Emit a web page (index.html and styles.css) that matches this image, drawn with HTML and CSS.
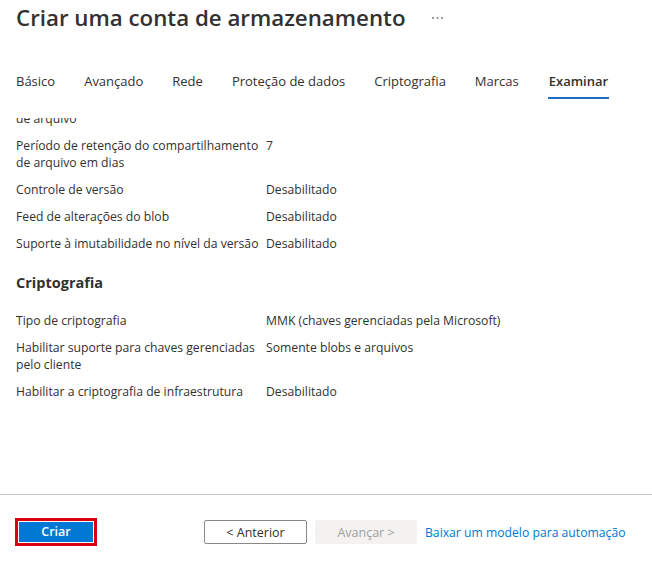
FILE: index.html
```html
<!DOCTYPE html>
<html lang="pt-BR">
<head>
<meta charset="utf-8">
<title>Criar uma conta de armazenamento</title>
<link rel="stylesheet" href="styles.css">
</head>
<body>
<div class="page">
  <header class="header">
    <h1 class="title">Criar uma conta de armazenamento</h1>
    <svg class="more" width="14" height="4" viewBox="0 0 14 4" aria-label="Mais"><circle cx="2" cy="2" r="1.1" fill="#8a8886"/><circle cx="6.5" cy="2" r="1.1" fill="#8a8886"/><circle cx="11" cy="2" r="1.1" fill="#8a8886"/></svg>
  </header>
  <nav class="tabs">
    <span class="tab">Básico</span>
    <span class="tab">Avançado</span>
    <span class="tab">Rede</span>
    <span class="tab">Proteção de dados</span>
    <span class="tab">Criptografia</span>
    <span class="tab">Marcas</span>
    <span class="tab active">Examinar</span>
  </nav>
  <main class="scroll">
    <div class="content">
      <div class="row"><div class="label nowrap">Exclusão temporária de compartilhamentos<br>de arquivo</div><div class="value">Habilitado</div></div>
      <div class="row"><div class="label">Período de retenção do compartilhamento de arquivo em dias</div><div class="value">7</div></div>
      <div class="row"><div class="label">Controle de versão</div><div class="value">Desabilitado</div></div>
      <div class="row"><div class="label">Feed de alterações do blob</div><div class="value">Desabilitado</div></div>
      <div class="row"><div class="label">Suporte à imutabilidade no nível da versão</div><div class="value">Desabilitado</div></div>
      <h2 class="section">Criptografia</h2>
      <div class="row"><div class="label">Tipo de criptografia</div><div class="value">MMK (chaves gerenciadas pela Microsoft)</div></div>
      <div class="row"><div class="label">Habilitar suporte para chaves gerenciadas pelo cliente</div><div class="value">Somente blobs e arquivos</div></div>
      <div class="row"><div class="label">Habilitar a criptografia de infraestrutura</div><div class="value">Desabilitado</div></div>
    </div>
  </main>
  <footer class="footer">
    <span class="highlight"><button class="btn primary">Criar</button></span>
    <button class="btn secondary">&lt; Anterior</button>
    <button class="btn disabled">Avançar &gt;</button>
    <a class="link" href="#">Baixar um modelo para automação</a>
  </footer>
</div>
</body>
</html>
```

FILE: styles.css
```css
* { box-sizing: border-box; }
html, body { margin: 0; padding: 0; background: #fff; }
body {
  font-family: "Open Sans", "Noto Sans", sans-serif;
  color: #323130;
  font-size: 12.2px;
}
.page {
  width: 652px;
  height: 569px;
  display: flex;
  flex-direction: column;
  overflow: hidden;
}
.header {
  display: flex;
  align-items: center;
  padding: 1px 0 0 16px;
  height: 34px;
}
.title {
  margin: 0;
  font-size: 22.3px;
  font-weight: 600;
  line-height: 32px;
  color: #323130;
}
.more {
  margin-left: 25px;
  margin-top: 1px;
  display: block;
}
.tabs {
  display: flex;
  gap: 29px;
  padding: 0 0 0 16px;
  margin-top: 29px;
}
.tab {
  font-size: 13px;
  line-height: 20px;
  padding: 8px 0 6px;
  border-bottom: 2px solid transparent;
  color: #323130;
}
.tab.active {
  font-weight: 600;
  border-bottom-color: #1b6ec2;
  padding-left: 1px;
  padding-right: 1px;
}
.scroll {
  margin-top: 19px;
  height: 376px;
  overflow: hidden;
}
.content {
  margin-top: -25px;
}
.row {
  display: grid;
  grid-template-columns: 250px 1fr;
  padding: 0 16px;
  line-height: 17px;
  margin-bottom: 10px;
}
.label { padding-right: 2px; }
.nowrap { white-space: nowrap; }
.section {
  margin: 19.5px 0 18.5px;
  padding-left: 16px;
  font-size: 14.5px;
  line-height: 22px;
  font-weight: 700;
  color: #323130;
}
.footer {
  border-top: 1px solid #c8c6c4;
  display: flex;
  padding: 23px 0 0 15px;
  height: 75px;
  align-items: flex-start;
}
.highlight {
  display: inline-flex;
  border: 3px solid #d9000f;
  padding: 1px;
  width: 82px;
  height: 28px;
}
.btn {
  font-family: inherit;
  font-size: 12.5px;
  border-radius: 2px;
  height: 24px;
  padding: 0;
  margin-top: 2px;
}
.primary {
  width: 100%;
  height: 20px;
  margin: 0;
  border: none;
  border-radius: 0;
  background: #0078d4;
  color: #fff;
  font-weight: 600;
  line-height: 20px;
}
.secondary {
  margin-left: 107px;
  width: 103px;
  background: #fff;
  border: 1px solid #8a8886;
  color: #323130;
}
.disabled {
  margin-left: 8px;
  width: 102px;
  background: #f3f2f1;
  border: none;
  color: #a19f9d;
}
.link {
  margin-left: 8px;
  margin-top: 5px;
  color: #0078d4;
  text-decoration: none;
  line-height: 20px;
}
```
